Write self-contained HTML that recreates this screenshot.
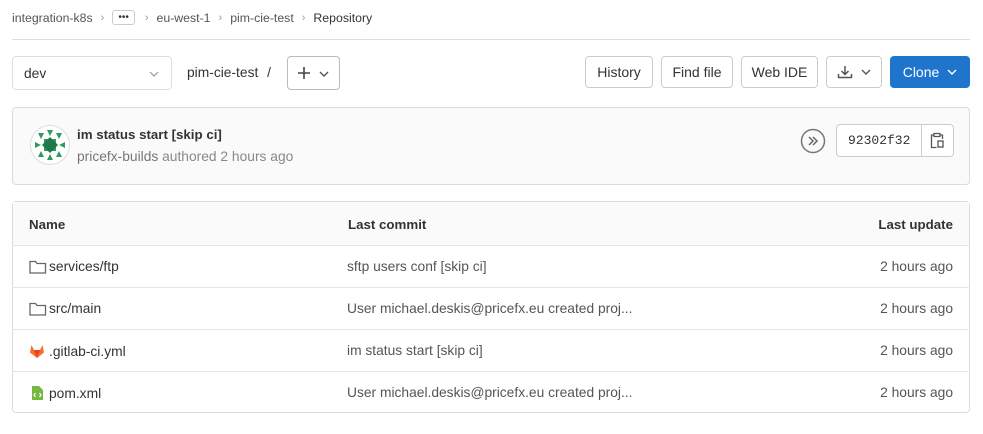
<!DOCTYPE html>
<html><head><style>
*{box-sizing:border-box;margin:0;padding:0}
body{width:983px;height:434px;background:#fff;font-family:"Liberation Sans",sans-serif;color:#333;font-size:13.8px;position:relative;overflow:hidden}
.abs{position:absolute}
.bc{top:9px;left:12px;font-size:12.3px;color:#555;display:flex;align-items:center;height:17px}
.bc span{margin-right:8px}
.bc .sep{color:#999;font-size:11px}
.btn{position:absolute;top:56px;height:32px;border:1px solid #ccc;border-radius:4px;background:#fff;display:flex;align-items:center;justify-content:center;font-size:14px;color:#333}
.row{position:absolute;left:12px;width:958px;height:42px;border-top:1px solid #e5e5e5}
.row .n{position:absolute;left:17px;top:13px;display:flex;align-items:center}
.row .c{position:absolute;left:335px;top:13px;color:#555}
.row .u{position:absolute;right:17px;top:13px;color:#555}
</style></head><body>
<div class="abs bc"><span>integration-k8s</span><span class="sep">›</span><span style="border:1px solid #ccc;border-radius:3px;padding:0 5px;font-size:10px;line-height:13px;color:#333;margin-right:10px">•••</span><span class="sep">›</span><span>eu-west-1</span><span class="sep">›</span><span>pim-cie-test</span><span class="sep">›</span><span style="color:#333">Repository</span></div>
<div class="abs" style="top:39px;left:12px;width:958px;height:1px;background:#ddd"></div>

<div class="abs" style="left:12px;top:56px;width:160px;height:34px;border:1px solid #ddd;border-radius:4px;"><span class="abs" style="left:11px;top:9px">dev</span><svg class="abs" style="left:136px;top:13px" width="10" height="8"><path d="M1 2l4 4 4-4" stroke="#999" fill="none" stroke-width="1.2"/></svg></div>
<div class="abs" style="left:187px;top:65px">pim-cie-test <span style="margin-left:5px">/</span></div>
<div class="abs" style="left:287px;top:56px;width:53px;height:34px;border:1px solid #bbb;border-radius:4px"><svg class="abs" style="left:9px;top:9px" width="14" height="14"><path d="M7 1v12M1 7h12" stroke="#444" stroke-width="1.6"/></svg><svg class="abs" style="left:31px;top:13px" width="10" height="8"><path d="M1 2l4 4 4-4" stroke="#555" fill="none" stroke-width="1.4"/></svg></div>

<div class="btn" style="left:585px;width:68px">History</div>
<div class="btn" style="left:661px;width:72px">Find file</div>
<div class="btn" style="left:741px;width:77px">Web IDE</div>
<div class="btn" style="left:826px;width:56px"><svg width="16" height="14"><path d="M8 1v8M4.5 6l3.5 3.5 3.5-3.5M1.5 9v3.5h13V9" stroke="#555" fill="none" stroke-width="1.5"/></svg><svg style="margin-left:8px" width="10" height="8"><path d="M1 2l4 4 4-4" stroke="#555" fill="none" stroke-width="1.4"/></svg></div>
<div class="btn" style="left:890px;width:80px;background:#1f75cb;border-color:#1f75cb;color:#fff">Clone<svg style="margin-left:8px" width="10" height="8"><path d="M1 2l4 4 4-4" stroke="#fff" fill="none" stroke-width="1.4"/></svg></div>

<div class="abs" style="left:12px;top:107px;width:958px;height:78px;background:#fafafa;border:1px solid #dbdbdb;border-radius:4px">
<svg class="abs" style="left:17px;top:17px" width="40" height="40"><circle cx="20" cy="20" r="19.5" fill="#fff" stroke="#ddd"/>
<g fill="#2e9a62"><path d="M8 8h6l-3 6z M26 8h6l-3 6z M17 5l3 6 3-6z M5 17l6 3-6 3z M35 17l-6 3 6 3z M14 14h12v12H14z M8 32h6l-3-6z M26 32h6l-3-6z M17 35l3-6 3 6z"/><path d="M20 12l8 8-8 8-8-8z" fill="#1f7a4a"/></g></svg>
<div class="abs" style="left:64px;top:19px;font-weight:bold;font-size:13.3px;color:#333">im status start [skip ci]</div>
<div class="abs" style="left:64px;top:41px;color:#777">pricefx-builds <span style="color:#888">authored 2 hours ago</span></div>
<svg class="abs" style="left:787px;top:20px" width="26" height="26"><circle cx="13" cy="13" r="11.5" fill="none" stroke="#777" stroke-width="1.5"/><path d="M9 9l4 4-4 4M13 9l4 4-4 4" stroke="#666" fill="none" stroke-width="1.5"/></svg>
<div class="abs" style="left:823px;top:16px;width:118px;height:33px;border:1px solid #ccc;border-radius:4px;background:#fff"><span class="abs" style="left:11px;top:8px;font-family:'Liberation Mono',monospace;font-size:13px">92302f32</span><div class="abs" style="left:84px;top:0;width:1px;height:31px;background:#ccc"></div><svg class="abs" style="left:93px;top:7px" width="14" height="17"><path d="M4 3H1.5v12.5h5M10 3h2.5v4M4 1.5h6v3H4z" stroke="#555" fill="none" stroke-width="1.3"/><rect x="8" y="9" width="5" height="6" stroke="#555" fill="none" stroke-width="1.3"/></svg></div>
</div>

<div class="abs" style="left:12px;top:201px;width:958px;height:212px;border:1px solid #dbdbdb;border-radius:4px"></div>
<div class="abs" style="left:13px;top:202px;width:956px;height:43px;background:#fafafa"></div>
<div class="abs" style="left:29px;top:217px;font-weight:bold;font-size:13.3px">Name</div>
<div class="abs" style="left:348px;top:217px;font-weight:bold;font-size:13.3px">Last commit</div>
<div class="abs" style="right:30px;top:217px;font-weight:bold;font-size:13.3px">Last update</div>

<div class="row" style="top:245px"><div class="n"><svg width="18" height="14" style="margin-right:2px"><path d="M1 1.5h5.5l1.5 2h8.5v9.5H1z" stroke="#666" fill="none" stroke-width="1.3"/></svg>services/ftp</div><div class="c">sftp users conf [skip ci]</div><div class="u">2 hours ago</div></div>
<div class="row" style="top:287px"><div class="n"><svg width="18" height="14" style="margin-right:2px"><path d="M1 1.5h5.5l1.5 2h8.5v9.5H1z" stroke="#666" fill="none" stroke-width="1.3"/></svg>src/main</div><div class="c">User michael.deskis@pricefx.eu created proj...</div><div class="u">2 hours ago</div></div>
<div class="row" style="top:329px"><div class="n"><svg width="18" height="16" style="margin-right:2px"><path d="M8 15L1 9.5 2.5 2l2.5 5h6L13.5 2 15 9.5z" fill="#fc6d26"/><path d="M8 15L5 7h6z" fill="#e24329"/></svg>.gitlab-ci.yml</div><div class="c">im status start [skip ci]</div><div class="u">2 hours ago</div></div>
<div class="row" style="top:371px"><div class="n"><svg width="18" height="16" style="margin-right:2px"><path d="M3 1h7l4 4v10H3z" fill="#75b83f"/><path d="M6.5 8l-1.5 2 1.5 2M10.5 8l1.5 2-1.5 2" stroke="#fff" fill="none" stroke-width="1.2"/></svg>pom.xml</div><div class="c">User michael.deskis@pricefx.eu created proj...</div><div class="u">2 hours ago</div></div>
</body></html>
